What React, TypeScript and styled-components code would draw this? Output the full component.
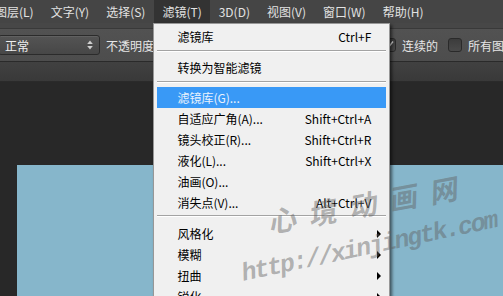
import styled, { createGlobalStyle } from "styled-components";

const GlobalStyle = createGlobalStyle`
  html, body {
    margin: 0;
    padding: 0;
    background: #282828;
    overflow: hidden;
  }
`;

const topMenus = [
  "图层(L)",
  "文字(Y)",
  "选择(S)",
  "滤镜(T)",
  "3D(D)",
  "视图(V)",
  "窗口(W)",
  "帮助(H)",
];

type Entry =
  | { kind: "item"; label: string; shortcut?: string; active?: boolean; sub?: boolean }
  | { kind: "sep"; above: number; below: number };

const filterMenu: Entry[] = [
  { kind: "item", label: "滤镜库", shortcut: "Ctrl+F" },
  { kind: "sep", above: 3, below: 5 },
  { kind: "item", label: "转换为智能滤镜" },
  { kind: "sep", above: 3, below: 4 },
  { kind: "item", label: "滤镜库(G)...", active: true },
  { kind: "item", label: "自适应广角(A)...", shortcut: "Shift+Ctrl+A" },
  { kind: "item", label: "镜头校正(R)...", shortcut: "Shift+Ctrl+R" },
  { kind: "item", label: "液化(L)...", shortcut: "Shift+Ctrl+X" },
  { kind: "item", label: "油画(O)..." },
  { kind: "item", label: "消失点(V)...", shortcut: "Alt+Ctrl+V" },
  { kind: "sep", above: 2, below: 6 },
  { kind: "item", label: "风格化", sub: true },
  { kind: "item", label: "模糊", sub: true },
  { kind: "item", label: "扭曲", sub: true },
  { kind: "item", label: "锐化", sub: true },
];

const CheckMark = () => (
  <svg width="10" height="10" viewBox="0 0 10 10">
    <path d="M1.5 5.5 L4 8 L9 1.5" fill="none" stroke="#d8d8d8" strokeWidth="1.4" />
  </svg>
);

const SpinArrows = () => (
  <svg width="6" height="10" viewBox="0 0 6 10">
    <path d="M3 0.5 L5.8 4 L0.2 4 Z" fill="#cfcfcf" />
    <path d="M3 9.5 L5.8 6 L0.2 6 Z" fill="#cfcfcf" />
  </svg>
);

export default function App() {
  return (
    <Screen>
      <GlobalStyle />
      <MenuBar>
        {topMenus.map((name) => (
          <TopItem key={name} $open={name === "滤镜(T)"}>
            {name}
            {name === "滤镜(T)" && (
              <Dropdown>
                {filterMenu.map((entry, i) =>
                  entry.kind === "sep" ? (
                    <Separator key={i} $above={entry.above} $below={entry.below} />
                  ) : (
                    <Row key={i} $active={entry.active}>
                      <span>{entry.label}</span>
                      {entry.shortcut && <span>{entry.shortcut}</span>}
                      {entry.sub && <SubArrow />}
                    </Row>
                  )
                )}
              </Dropdown>
            )}
          </TopItem>
        ))}
      </MenuBar>

      <OptionsBar>
        <ModeSelect>
          <span>正常</span>
          <SpinArrows />
        </ModeSelect>
        <OptionLabel>不透明度</OptionLabel>
        <Gap $w={228} />
        <CheckBox>
          <CheckMark />
        </CheckBox>
        <OptionLabel>连续的</OptionLabel>
        <CheckBox $gap={10} />
        <OptionLabel>所有图层</OptionLabel>
      </OptionsBar>

      <TabStrip />

      <Workspace>
        <Document />
      </Workspace>

      <Watermark>
        <BrandMark>心境动画网</BrandMark>
        <SiteMark>http://xinjingtk.com</SiteMark>
      </Watermark>
    </Screen>
  );
}

const Screen = styled.div`
  position: relative;
  width: 100vw;
  height: 100vh;
  overflow: hidden;
  display: flex;
  flex-direction: column;
  background: #282828;
  font-family: "Noto Sans CJK SC", "Liberation Sans", sans-serif;
  font-size: 12px;
`;

const MenuBar = styled.div`
  position: relative;
  z-index: 5;
  display: flex;
  gap: 1px;
  height: 23px;
  margin-left: -13px;
  background: #454545;
  white-space: nowrap;
`;

const TopItem = styled.div<{ $open?: boolean }>`
  position: relative;
  display: flex;
  align-items: center;
  padding: 0 8px;
  color: #e2e2e2;
  background: ${(p) => (p.$open ? "#333333" : "transparent")};
`;

const Dropdown = styled.div`
  position: absolute;
  top: 23px;
  left: -1px;
  width: 235px;
  height: 290px;
  padding-top: 2px;
  background: #f0f0f0;
  border: 1px solid #979797;
  box-shadow: 2px 2px 3px rgba(0, 0, 0, 0.55);
  color: #000;
`;

const Row = styled.div<{ $active?: boolean }>`
  position: relative;
  display: flex;
  align-items: center;
  justify-content: space-between;
  height: 21px;
  margin: 0 3px;
  padding: 0 15px 0 20px;
  background: ${(p) => (p.$active ? "#3999f6" : "transparent")};
  color: ${(p) => (p.$active ? "#e9f2fd" : "#000")};
`;

const SubArrow = styled.i`
  position: absolute;
  right: 5px;
  top: 7px;
  width: 0;
  height: 0;
  border-left: 4px solid #000;
  border-top: 4px solid transparent;
  border-bottom: 4px solid transparent;
`;

const Separator = styled.div<{ $above: number; $below: number }>`
  margin: ${(p) => `${p.$above}px 3px ${p.$below}px`};
  border-top: 1px solid #a3a3a3;
  border-bottom: 1px solid #ffffff;
`;

const OptionsBar = styled.div`
  display: flex;
  align-items: center;
  height: 39px;
  padding-top: 6px;
  box-sizing: border-box;
  background: linear-gradient(#474747 0 5px, #393939 5px 6px, #525252 6px, #4d4d4d);
  border-bottom: 1px solid #2a2a2a;
  color: #e6e6e6;
  white-space: nowrap;
  overflow: hidden;
`;

const ModeSelect = styled.div`
  flex: none;
  display: flex;
  align-items: center;
  justify-content: space-between;
  width: 102px;
  height: 20px;
  margin-left: -2px;
  padding: 0 6px;
  box-sizing: border-box;
  border: 1px solid #2b2b2b;
  border-radius: 3px;
  background: linear-gradient(#545454, #474747);
  box-shadow: inset 0 1px 0 rgba(255, 255, 255, 0.08);
  color: #eeeeee;
`;

const OptionLabel = styled.span<{ $gap?: number }>`
  flex: none;
  margin-left: ${(p) => p.$gap ?? 6}px;
`;

const Gap = styled.div<{ $w: number }>`
  flex: none;
  width: ${(p) => p.$w}px;
`;

const CheckBox = styled.div<{ $gap?: number }>`
  flex: none;
  display: flex;
  align-items: center;
  justify-content: center;
  width: 14px;
  height: 14px;
  margin-left: ${(p) => p.$gap ?? 0}px;
  box-sizing: border-box;
  border: 1px solid #2a2a2a;
  border-radius: 3px;
  background: linear-gradient(#3c3c3c, #4a4a4a);
`;

const TabStrip = styled.div`
  height: 19px;
  background: linear-gradient(#414141, #393939);
  border-bottom: 1px solid #2a2a2a;
`;

const Workspace = styled.div`
  flex: 1;
  padding: 83px 0 0 17px;
  background: #282828;
`;

const Document = styled.div`
  height: 100%;
  background: #86b6cb;
`;

const Watermark = styled.div`
  position: absolute;
  inset: 0;
  z-index: 10;
  pointer-events: none;
  color: rgba(96, 96, 96, 0.45);
`;

const BrandMark = styled.span`
  position: absolute;
  left: 270px;
  top: 207px;
  font-family: "Noto Sans CJK SC", sans-serif;
  font-size: 28px;
  font-weight: 700;
  letter-spacing: 13px;
  line-height: 1;
  white-space: nowrap;
  transform-origin: left center;
  transform: rotate(-10.5deg) skewX(-12deg);
`;

const SiteMark = styled.span`
  position: absolute;
  left: 242px;
  top: 262px;
  font-family: "Liberation Mono", monospace;
  font-size: 25px;
  font-weight: 700;
  font-style: italic;
  letter-spacing: -2px;
  line-height: 1;
  white-space: nowrap;
  transform-origin: left center;
  transform: rotate(-12deg);
`;
